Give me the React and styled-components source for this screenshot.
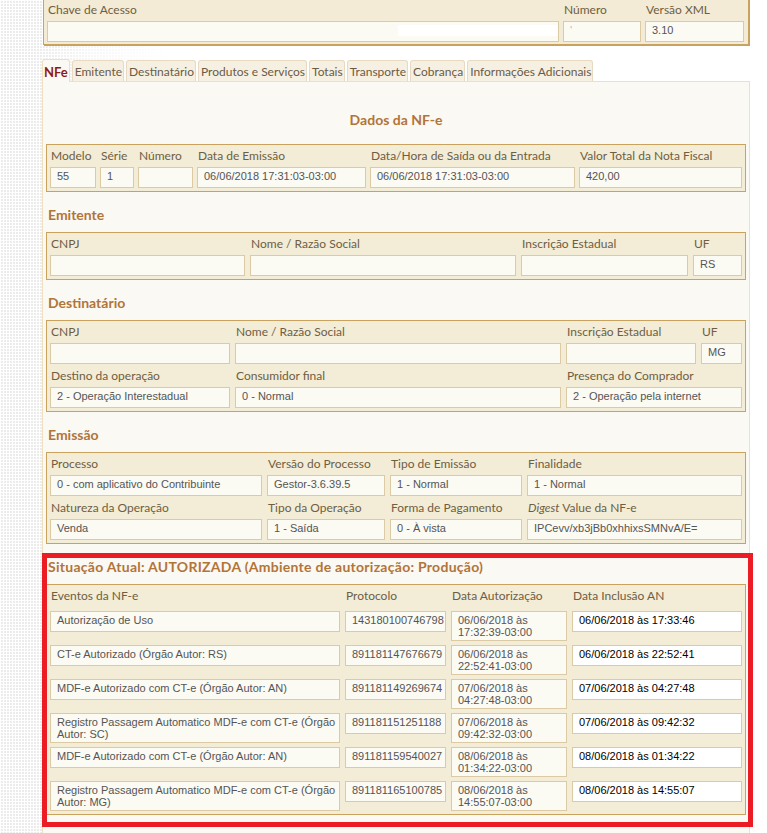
import React from "react";
import styled, { createGlobalStyle, css } from "styled-components";

const GlobalStyle = createGlobalStyle`
    body{
        margin: 0;
        font-family: Lato, "Open Sans", sans-serif;
        background: #fff;
    }
`

const Shell = styled.div`
    min-height: 100vh;
    overflow: hidden;
    background-color: #fff;
    background-image:
        linear-gradient(to right, rgba(255,255,255,0) 36px, rgba(255,255,255,0.6) 90px, #fff 170px),
        linear-gradient(90deg, #fff 1px, transparent 1px),
        linear-gradient(#fff 1px, #ebebeb 1px);
    background-size: 100% 100%, 3px 3px, 3px 3px;
`

const Page = styled.div`
    width: 708px;
    margin-left: 42px;
    padding-bottom: 30px;
`

const TopPanel = styled.div`
    margin: -1px 1px 0 1px;
    border: 1px solid #c9a25e;
    box-shadow: 1px 1px 0 #c9a25e;
    background: #f3ebd6;
    padding: 3px 4px 2px 3px;
    display: grid;
    grid-template-columns: 512px 78px 1fr;
    column-gap: 4px;
`

const TabBar = styled.div`
    display: flex;
    align-items: flex-end;
    gap: 2px;
    margin-top: 14px;
    margin-bottom: -1px;
    position: relative;
`

const Tab = styled.div`
    height: 21px;
    box-sizing: border-box;
    padding: 2px 1px 0 2px;
    margin-bottom: 1px;
    border: 1px solid #e7dac0;
    border-bottom: none;
    border-radius: 3px 3px 0 0;
    background: #f6f0e2;
    color: #6b5b45;
    font-size: 12px;
    line-height: 18px;
    white-space: nowrap;

    ${p => p.$active && css`
        height: 23px;
        margin-bottom: 0;
        padding: 2px 1px 0;
        border-color: #f0dfc1;
        background: #faf9f4;
        color: #8e1b10;
        font-weight: bold;
        font-size: 13px;
        line-height: 20px;
    `}
`

const TabPanel = styled.div`
    border: 1px solid #f0e0c2;
    background: #faf9f4;
    padding: 0 3px 60px;
`

const Title = styled.h2`
    margin: 0;
    padding: 29px 0 0;
    margin-bottom: 15px;
    text-align: center;
    font-size: 14px;
    line-height: 18px;
    color: #b37438;
`

const Heading = styled.h3`
    margin: 14px 0 8px 2px;
    font-size: 14px;
    line-height: 18px;
    color: #b37438;
    white-space: nowrap;
    letter-spacing: ${p => p.$wide ? "0.27px" : "normal"};
`

const Group = styled.div`
    border: 1px solid #c9a25e;
    background: #f3ecd7;
    padding: 4px 3px 3px 3px;
    display: grid;
    grid-template-columns: ${p => p.$cols};
    column-gap: ${p => p.$gap || 5}px;
    row-gap: ${p => p.$rowGap || 5}px;
    align-items: start;
`

const FieldWrap = styled.div`
    min-width: 0;
    grid-column: span ${p => p.$span || 1};
`

const Label = styled.div`
    font-size: 12px;
    line-height: 14px;
    color: #6f5e42;
    margin-bottom: ${p => p.$mb ?? 4}px;
    padding-left: ${p => p.$pl || 1}px;
    white-space: nowrap;
    overflow: hidden;

    & i{
        font-style: italic;
    }
`

const Value = styled.div`
    box-sizing: border-box;
    min-height: 21px;
    border: 1px solid #dccaa4;
    background: ${p => p.$dark ? "#fff" : "#fbfaf3"};
    color: ${p => p.$dark ? "#000" : "#555"};
    padding: 2px 1px 2px 6px;
    font-family: "Liberation Sans", Arial, sans-serif;
    font-size: 11px;
    line-height: 12px;
    overflow: hidden;
    display: flex;
    flex-wrap: wrap;
`

const Redacted = styled.span`
    display: inline-block;
    width: 160px;
    height: 11px;
    margin: 1px -1px 0 auto;
    background: #fff;
`

const Highlight = styled.div`
    position: relative;
    margin-top: 14px;

    & > h3{
        margin-top: 0;
    }

    &::after{
        content: "";
        position: absolute;
        top: -5px;
        left: -4px;
        right: -7px;
        bottom: -12px;
        border: 5px solid #ec1c24;
        pointer-events: none;
    }
`

function Field({label, value, span, dark}){
    return (
        <FieldWrap $span={span}>
            <Label>{label}</Label>
            <Value $dark={dark}>{value}</Value>
        </FieldWrap>
    );
}

const tabs = ["NFe", "Emitente", "Destinatário", "Produtos e Serviços", "Totais", "Transporte", "Cobrança", "Informações Adicionais"];

const eventos = [
    ["Autorização de Uso", "143180100746798", "06/06/2018 às 17:32:39-03:00", "06/06/2018 às 17:33:46"],
    ["CT-e Autorizado (Órgão Autor: RS)", "891181147676679", "06/06/2018 às 22:52:41-03:00", "06/06/2018 às 22:52:41"],
    ["MDF-e Autorizado com CT-e (Órgão Autor: AN)", "891181149269674", "07/06/2018 às 04:27:48-03:00", "07/06/2018 às 04:27:48"],
    ["Registro Passagem Automatico MDF-e com CT-e (Órgão Autor: SC)", "891181151251188", "07/06/2018 às 09:42:32-03:00", "07/06/2018 às 09:42:32"],
    ["MDF-e Autorizado com CT-e (Órgão Autor: AN)", "891181159540027", "08/06/2018 às 01:34:22-03:00", "08/06/2018 às 01:34:22"],
    ["Registro Passagem Automatico MDF-e com CT-e (Órgão Autor: MG)", "891181165100785", "08/06/2018 às 14:55:07-03:00", "08/06/2018 às 14:55:07"],
];

export default function App(){
    return (
        <Shell>
            <GlobalStyle/>
            <Page>
                <TopPanel>
                    <Field label="Chave de Acesso" value={<Redacted/>}/>
                    <Field label="Número" value={<span style={{color: "#bbb"}}>'</span>}/>
                    <Field label="Versão XML" value="3.10"/>
                </TopPanel>

                <TabBar>
                    {tabs.map((t, i) => (
                        <Tab key={t} $active={i === 0}>{t}</Tab>
                    ))}
                </TabBar>

                <TabPanel>
                    <Title>Dados da NF-e</Title>
                    <Group $cols="46px 34px 55px 169px 205px 1fr" $gap={4}>
                        <Field label="Modelo" value="55"/>
                        <Field label="Série" value="1"/>
                        <Field label="Número" value=""/>
                        <Field label="Data de Emissão" value="06/06/2018 17:31:03-03:00"/>
                        <Field label="Data/Hora de Saída ou da Entrada" value="06/06/2018 17:31:03-03:00"/>
                        <Field label="Valor Total da Nota Fiscal" value="420,00"/>
                    </Group>

                    <Heading>Emitente</Heading>
                    <Group $cols="195px 266px 167px 1fr">
                        <Field label="CNPJ" value=""/>
                        <Field label="Nome / Razão Social" value=""/>
                        <Field label="Inscrição Estadual" value=""/>
                        <Field label="UF" value="RS"/>
                    </Group>

                    <Heading>Destinatário</Heading>
                    <Group $cols="180px 326px 130px 1fr">
                        <Field label="CNPJ" value=""/>
                        <Field label="Nome / Razão Social" value=""/>
                        <Field label="Inscrição Estadual" value=""/>
                        <Field label="UF" value="MG"/>
                        <Field label="Destino da operação" value="2 - Operação Interestadual"/>
                        <Field label="Consumidor final" value="0 - Normal"/>
                        <Field label="Presença do Comprador" value="2 - Operação pela internet" span={2}/>
                    </Group>

                    <Heading>Emissão</Heading>
                    <Group $cols="212px 118px 132px 1fr">
                        <Field label="Processo" value="0 - com aplicativo do Contribuinte"/>
                        <Field label="Versão do Processo" value="Gestor-3.6.39.5"/>
                        <Field label="Tipo de Emissão" value="1 - Normal"/>
                        <Field label="Finalidade" value="1 - Normal"/>
                        <Field label="Natureza da Operação" value="Venda"/>
                        <Field label="Tipo da Operação" value="1 - Saída"/>
                        <Field label="Forma de Pagamento" value="0 - À vista"/>
                        <Field label={<><i>Digest</i> Value da NF-e</>} value="IPCevv/xb3jBb0xhhixsSMNvA/E="/>
                    </Group>

                    <Highlight>
                        <Heading $wide>Situação Atual: AUTORIZADA (Ambiente de autorização: Produção)</Heading>
                        <Group $cols="290px 101px 116px 1fr" $rowGap={4}>
                            <Label $mb={4}>Eventos da NF-e</Label>
                            <Label $mb={4}>Protocolo</Label>
                            <Label $mb={4}>Data Autorização</Label>
                            <Label $mb={4}>Data Inclusão AN</Label>
                            {eventos.map(ev => (
                                <React.Fragment key={ev[1]}>
                                    <Value>{ev[0]}</Value>
                                    <Value>{ev[1]}</Value>
                                    <Value>{ev[2]}</Value>
                                    <Value $dark>{ev[3]}</Value>
                                </React.Fragment>
                            ))}
                        </Group>
                    </Highlight>
                </TabPanel>
            </Page>
        </Shell>
    );
}
